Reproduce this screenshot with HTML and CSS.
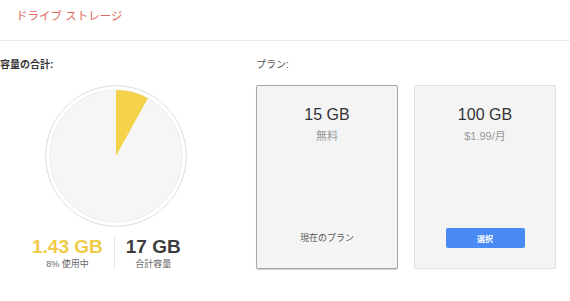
FILE: index.html
```html
<!DOCTYPE html>
<html lang="ja">
<head>
<meta charset="utf-8">
<title>ドライブ ストレージ</title>
<link rel="stylesheet" href="styles.css">
</head>
<body>
<header class="header">
  <h1 class="title">ドライブ ストレージ</h1>
</header>
<main class="main">
  <section class="usage">
    <h2 class="label label-strong">容量の合計:</h2>
    <div class="pie-wrap">
      <svg class="pie" width="142" height="142" viewBox="0 0 142 142">
        <circle cx="71" cy="71" r="70.3" fill="#ffffff" stroke="#dcdcdc" stroke-width="1"/>
        <circle cx="71" cy="71" r="66" fill="#f6f6f6" stroke="#ececec" stroke-width="1"/>
        <path d="M71 71 L71 5 A66 66 0 0 1 102.8 13.2 Z" fill="#f4d24a"/>
      </svg>
    </div>
    <div class="stats">
      <div class="stat">
        <div class="stat-value used">1.43 GB</div>
        <div class="stat-caption">8% 使用中</div>
      </div>
      <div class="stat stat-divided">
        <div class="stat-value total">17 GB</div>
        <div class="stat-caption">合計容量</div>
      </div>
    </div>
  </section>
  <section class="plans">
    <h2 class="label">プラン:</h2>
    <div class="cards">
      <div class="card card-current">
        <div class="card-size">15 GB</div>
        <div class="card-price">無料</div>
        <div class="card-foot"><span class="current-text">現在のプラン</span></div>
      </div>
      <div class="card">
        <div class="card-size">100 GB</div>
        <div class="card-price">$1.99/月</div>
        <div class="card-foot"><button class="btn" type="button">選択</button></div>
      </div>
    </div>
  </section>
</main>
</body>
</html>
```
FILE: styles.css
```css
* { box-sizing: border-box; }
html, body { margin: 0; padding: 0; background: #ffffff; }
body {
  font-family: "Liberation Sans", "Noto Sans CJK JP", sans-serif;
  color: #333;
  width: 570px;
  height: 301px;
  overflow: hidden;
}
.header {
  height: 41px;
  padding: 8px 16px 0;
  border-bottom: 1px solid #ececec;
}
.title {
  margin: 0;
  font-size: 11.5px;
  line-height: 16px;
  font-weight: normal;
  color: #dd6a5c;
}
.main {
  display: flex;
  padding-top: 18px;
}
.label {
  margin: 0 0 14px;
  font-size: 10px;
  line-height: 12px;
  font-weight: normal;
  color: #555;
}
.label-strong {
  font-weight: bold;
  color: #333;
  padding-left: 4px;
}
.usage {
  width: 240px;
  margin-left: -4px;
}
.pie-wrap {
  display: flex;
  justify-content: center;
}
.pie { display: block; }
.stats {
  display: flex;
  padding-left: 25px;
  margin-top: 9px;
}
.stat {
  padding: 0 11px;
  text-align: center;
}
.stat-divided { border-left: 1px solid #e6e6e6; }
.stat-value {
  font-size: 19px;
  line-height: 22px;
  font-weight: bold;
}
.used { color: #f1cb48; }
.total { color: #3d3d3d; }
.stat-caption {
  font-size: 9px;
  line-height: 12px;
  color: #666;
}
.plans {
  margin-left: 20px;
}
.cards {
  display: flex;
  gap: 16px;
}
.card {
  width: 142px;
  height: 184px;
  background: #f4f4f4;
  border: 1px solid #e2e2e2;
  border-radius: 2px;
  display: flex;
  flex-direction: column;
  align-items: center;
  padding: 19px 0 20px;
}
.card-current {
  border-color: #a6a6a6;
  box-shadow: 0 1px 1px rgba(0,0,0,0.18);
}
.card-size {
  font-size: 16px;
  line-height: 20px;
  color: #333;
}
.card-price {
  margin-top: 4px;
  font-size: 11px;
  line-height: 14px;
  color: #999;
}
.card-foot {
  margin-top: auto;
  height: 20px;
  display: flex;
  align-items: center;
  justify-content: center;
}
.current-text {
  font-size: 9px;
  line-height: 12px;
  color: #555;
}
.btn {
  width: 79px;
  height: 20px;
  border: 0;
  border-radius: 2px;
  background: #4a8af4;
  color: #ffffff;
  font-family: "Liberation Sans", "Noto Sans CJK JP", sans-serif;
  font-size: 8px;
  font-weight: bold;
  padding: 0;
}
```
